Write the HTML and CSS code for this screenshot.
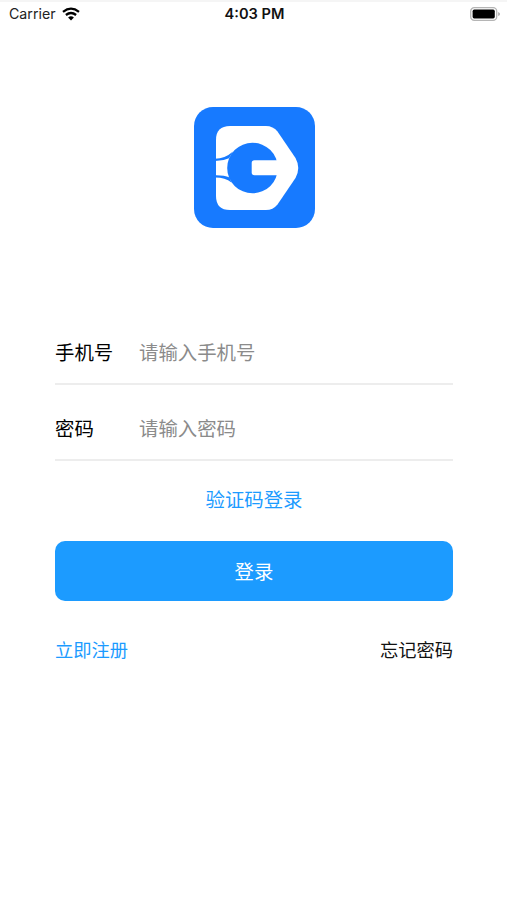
FILE: index.html
```html
<!DOCTYPE html>
<html lang="zh-CN">
<head>
<meta charset="utf-8">
<title>登录</title>
<link rel="stylesheet" href="styles.css">
</head>
<body>
<header class="status">
  <div class="carrier"><span>Carrier</span>
    <svg class="wifi" width="18" height="14" viewBox="0 0 18 14" fill="none" stroke="#000" stroke-width="2.3"><path d="M1 4.8Q9-1.6 17 4.8"/><path d="M3.9 8Q9 3.9 14.1 8"/><path d="M9 13.4L6.1 10.4Q9 8.1 11.9 10.4Z" fill="#000" stroke="none"/></svg>
  </div>
  <div class="time">4:03 PM</div>
  <svg class="battery" width="30" height="14" viewBox="0 0 30 14"><rect x=".7" y=".7" width="26" height="12.6" rx="3.6" fill="#fff" stroke="#b5b5b5" stroke-width="1.3"/><rect x="2.6" y="2.6" width="22.2" height="8.8" rx="1.6"/><path d="M28.2 4.9Q30 5.6 30 7T28.2 9.1Z" fill="#aaa"/></svg>
</header>
<main class="page">
  <svg class="logo" width="121" height="121" viewBox="0 0 121 121">
    <rect width="121" height="121" rx="19" fill="#177aff"/>
    <path d="M36 19H72Q79 19 83.5 24.5L101.5 51Q107 61 101.5 71L83.5 97.5Q79 103 72 103H36Q22 103 22 89V33Q22 19 36 19Z" fill="#fff"/>
    <circle cx="58.5" cy="61" r="25.3" fill="#177aff"/>
    <path d="M60.5 53.3H86V68.3H60.5Q57.7 68.3 57.7 65.5V56.1Q57.7 53.3 60.5 53.3Z" fill="#fff"/>
    <path d="M21 51.8Q31 51.7 39 44.5L35 51.2Q29 54 21 54.1ZM21 68.2Q30 68 35.5 70.6L37.5 75.5Q31 70.3 21 70.4Z" fill="#177aff"/>
  </svg>
  <form class="form">
    <label class="field"><span class="name">手机号</span><input type="text" placeholder="请输入手机号"></label>
    <label class="field"><span class="name">密码</span><input type="password" placeholder="请输入密码"></label>
    <a class="code">验证码登录</a>
    <button class="submit" type="button">登录</button>
    <div class="links"><a class="register">立即注册</a><a>忘记密码</a></div>
  </form>
</main>
</body>
</html>
```
FILE: styles.css
```css
* { box-sizing: border-box; }
body {
  margin: 0;
  height: 900px;
  overflow: hidden;
  background: #fff;
  color: #111;
  font-family: "Noto Sans CJK SC", sans-serif;
}
.status {
  display: grid;
  grid-template-columns: 1fr auto 1fr;
  height: 27px;
  padding: 0 7px 2px 9px;
  border-top: 2px solid #f5f5f5;
  align-items: center;
  font-family: Inter, sans-serif;
  font-size: 14.2px;
  line-height: 20px;
}
.carrier { display: flex; align-items: center; gap: 6px; color: #222; }
.time { font-size: 14.6px; font-weight: 600; }
.battery { justify-self: end; }
.page { padding: 80px 54px 0 55px; }
.logo { display: block; margin: 0 auto 93px; }
.form { display: flex; flex-direction: column; }
.field {
  display: flex;
  align-items: center;
  height: 76px;
  padding-top: 10px;
  border-bottom: 2px solid #ededed;
  font-size: 19.4px;
}
.field:first-child { height: 64px; padding: 0 0 2px; }
.name { width: 84px; color: #000; }
.field input {
  flex: 1;
  min-width: 0;
  padding: 0;
  border: 0;
  outline: 0;
  background: none;
  font: inherit;
}
.field input::placeholder { color: #8b8b8b; opacity: 1; }
.code {
  align-self: center;
  margin-top: 24px;
  color: #1c9bff;
  font-size: 19.4px;
  line-height: 28px;
}
.submit {
  height: 60px;
  margin-top: 28px;
  padding: 0 0 1px;
  border: 0;
  border-radius: 10px;
  background: #1c9bff;
  color: #fff;
  font: 19.4px/28px "Noto Sans CJK SC", sans-serif;
}
.links {
  display: flex;
  justify-content: space-between;
  margin-top: 34px;
  font-size: 18.3px;
  line-height: 28px;
}
.register { color: #1c9bff; }
```
